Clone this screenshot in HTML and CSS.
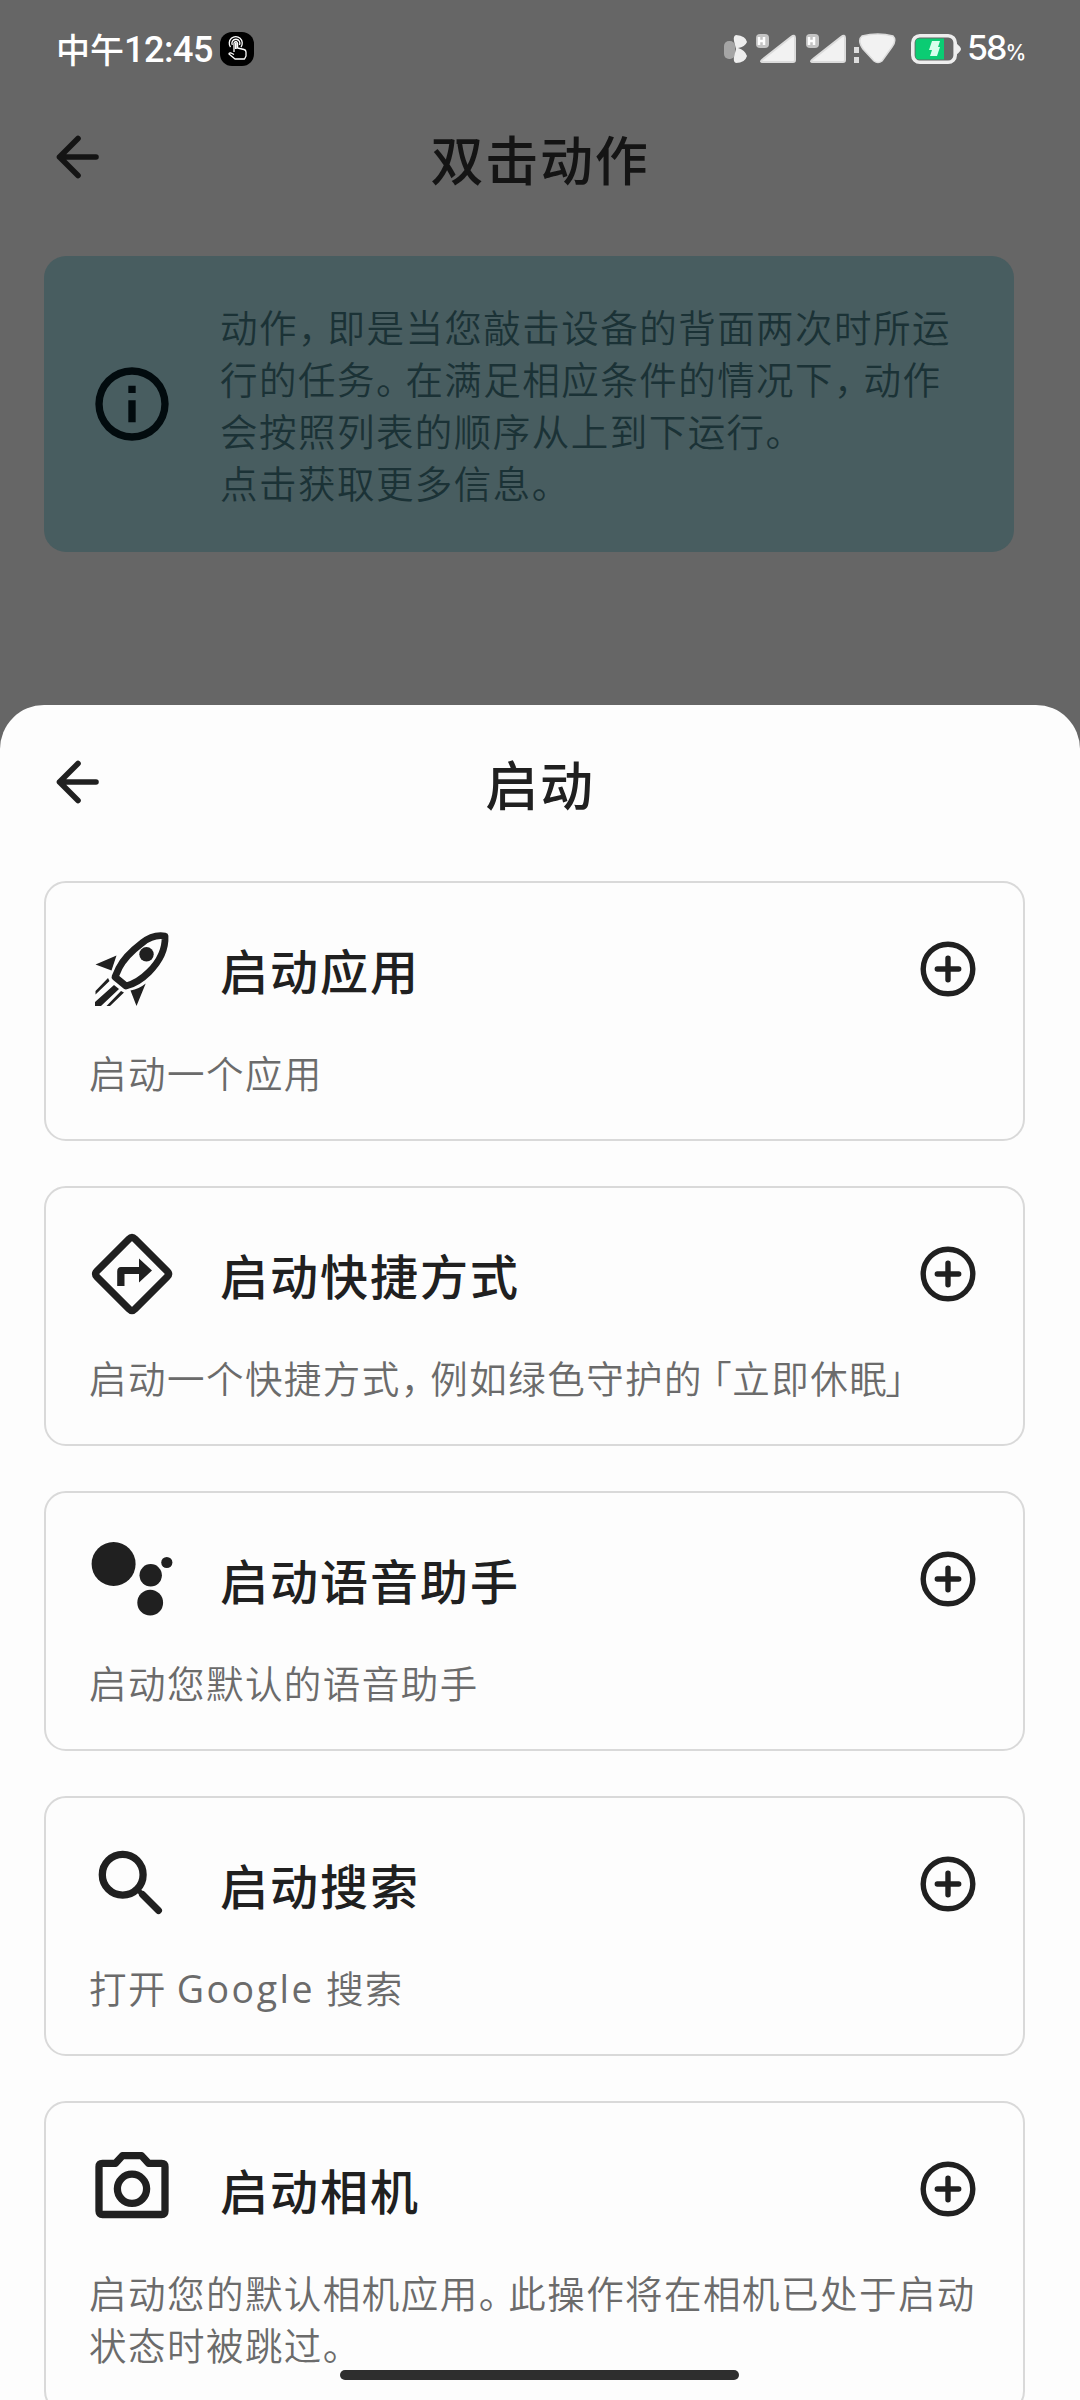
FILE: index.html
```html
<!DOCTYPE html>
<html lang="zh-CN">
<head>
<meta charset="utf-8">
<title>启动</title>
<link rel="stylesheet" href="styles.css">
</head>
<body>
<svg class="defs" width="0" height="0">
  <symbol id="back" viewBox="0 0 44 44"><path d="M3.500 22H40M22 3.500L3.500 22L22 40.500" fill="none" stroke="currentColor" stroke-width="5.600" stroke-linecap="round" stroke-linejoin="round"/></symbol>
  <symbol id="add" viewBox="0 0 56 56"><g fill="none" stroke="currentColor" stroke-width="5.400" stroke-linecap="round"><circle cx="28" cy="28" r="24.800"/><path d="M28 17.300V38.700M17.300 28H38.700"/></g></symbol>
  <symbol id="signal" viewBox="0 0 42 32"><rect x="0" y="1" width="13" height="14" rx="4" fill="#c4c4c4"/><path d="M3 4V12M3 8H8M8 4V12" stroke="#fff" stroke-width="2.500"/><path d="M7 26L35 4Q39 1 39 5V27Q39 29 37 29H7Q3 29 7 26Z" fill="#f2f2f2" stroke="#dcdcdc" stroke-width="2" stroke-linejoin="round"/></symbol>
</svg>
<div class="screen">
  <div class="status">
    <div class="clock"><span class="noon">中午</span><span class="digits">12:45</span></div>
    <svg class="touch" viewBox="0 0 34 34"><rect width="34" height="34" rx="12" fill="#000"/><g fill="none" stroke="#fff" stroke-width="1.300" stroke-linejoin="round"><path d="M10.500 15A6.500 6.500 0 1 1 21 15"/><path d="M12.300 13A4 4 0 1 1 19.500 13"/><path d="M14 20V11Q15.800 8 17.600 11V16L24 17.500Q26 18 26 20V24L24.500 27H15L9 22Q9 20.500 11 21L14 22.500"/></g><path d="M15 10.500H16.800V17H15Z" fill="#fff"/></svg>
    <div class="indicators">
      <svg class="bt" viewBox="0 0 26 34"><rect x="1" y="9" width="11" height="18" rx="5" fill="#a5a5a5"/><path d="M13 3Q23 4 24 10Q22 15 15 16Q22 18 24 24Q22 31 13 31Q10 30 11 25L13 17L11 9Q10 4 13 3Z" fill="#eee"/></svg>
      <svg class="sig"><use href="#signal"/></svg>
      <svg class="sig sig2"><use href="#signal"/></svg>
      <svg class="wifi" viewBox="0 0 42 32"><rect x="0" y="14" width="5" height="6" fill="#ddd"/><rect x="0" y="24" width="5" height="6" fill="#ddd"/><path d="M8 3Q24-1 39 3Q43 7 38 14L28 28Q24 31 20 28L9 16Q3 7 8 3Z" fill="#f2f2f2" stroke="#dcdcdc" stroke-width="1.500"/></svg>
      <svg class="battery" viewBox="0 0 50 30"><path d="M45 9Q50 13 50 15Q50 17 45 21Z" fill="#eee"/><rect x="1.800" y="1.800" width="42.400" height="26.400" rx="7" fill="#666" stroke="#eee" stroke-width="3.600"/><path d="M8 4.500H33V25.500H8Q4.500 25.500 4.500 22V8Q4.500 4.500 8 4.500Z" fill="#0bcc73"/><path d="M21 7H29L27 13H29L26 22H19L21 16H18Z" fill="#d8ffec"/></svg>
      <div class="percent">58<small>%</small></div>
    </div>
  </div>
  <header class="bar"><svg class="back"><use href="#back"/></svg><h1>双击动作</h1></header>
  <section class="info">
    <svg class="info-icon" viewBox="0 0 24 24"><path fill="currentColor" d="M11 7h2v2h-2zM11 11h2v6h-2zM12 2a10 10 0 1 0 0 20 10 10 0 0 0 0-20zm0 18a8 8 0 1 1 0-16 8 8 0 0 1 0 16z"/></svg>
    <p>动作<i>，</i>即是当您敲击设备的背面两次时所运<br>行的任务<i>。</i>在满足相应条件的情况下<i>，</i>动作<br>会按照列表的顺序从上到下运行<i>。</i><br>点击获取更多信息<i>。</i></p>
  </section>
</div>
<main class="sheet">
  <header class="bar"><svg class="back"><use href="#back"/></svg><h1>启动</h1></header>
  <div class="list">
    <article class="card">
      <div class="row">
        <svg class="icon" viewBox="0 0 88 88"><path d="M77 11Q65 9 54 18Q37 31 31 43L27 52L38 61Q50 58 61 47Q78 30 77 11Z" fill="none" stroke="currentColor" stroke-width="6.800" stroke-linejoin="round"/><circle cx="58.500" cy="29.300" r="7.200" fill="currentColor"/><path d="M28.500 30.500L7.500 39.500L23.500 45.500Z M57.700 58.500Q51 64 42.500 65.500L48.500 81Z M20 53L7.500 66V69.500L21.500 56Z M26 60L31 64L13 81H7V77Z M33 66L36 67.500L22 81H18.500Z" fill="currentColor"/></svg>
        <h2>启动应用</h2><svg class="add"><use href="#add"/></svg>
      </div>
      <p>启动一个应用</p>
    </article>
    <article class="card">
      <div class="row">
        <svg class="icon" viewBox="0 0 88 88"><path d="M41 9Q44 6 47 9L79 41Q82 44 79 47L47 79Q44 82 41 79L9 47Q6 44 9 41Z" fill="none" stroke="currentColor" stroke-width="7.300"/><path d="M29.200 56V41.500Q29.200 37 33 37H51V28.500L64 40.500L51 52.500V44H36.500V56Z" fill="currentColor"/></svg>
        <h2>启动快捷方式</h2><svg class="add"><use href="#add"/></svg>
      </div>
      <p>启动一个快捷方式<i>，</i>例如绿色守护的<span class="quote open">「</span>立即休眠<span class="quote close">」</span></p>
    </article>
    <article class="card">
      <div class="row">
        <svg class="icon" viewBox="0 0 88 88" fill="currentColor"><circle cx="25.600" cy="29" r="22"/><circle cx="62.700" cy="40.300" r="11.200"/><circle cx="62.200" cy="67.700" r="12.900"/><circle cx="78.800" cy="27.500" r="5.600"/></svg>
        <h2>启动语音助手</h2><svg class="add"><use href="#add"/></svg>
      </div>
      <p>启动您默认的语音助手</p>
    </article>
    <article class="card">
      <div class="row">
        <svg class="icon" viewBox="0 0 88 88" fill="none" stroke="currentColor"><circle cx="34.700" cy="34.700" r="20.400" stroke-width="7.300"/><path d="M50 50L54 54" stroke-width="5"/><path d="M54.500 54.500L70.500 70.500" stroke-width="7" stroke-linecap="round"/></svg>
        <h2>启动搜索</h2><svg class="add"><use href="#add"/></svg>
      </div>
      <p>打开 <span class="latin">Google</span> 搜索</p>
    </article>
    <article class="card">
      <div class="row">
        <svg class="icon" viewBox="0 0 88 88" fill="none" stroke="currentColor" stroke-width="7.300"><path d="M14.500 18.300H27.500L34.500 10.600H53.500L60.500 18.300H73.500Q77 18.300 77 21.800V66Q77 69.500 73.500 69.500H14.500Q11 69.500 11 66V21.800Q11 18.300 14.500 18.300Z" stroke-linejoin="round"/><circle cx="44" cy="43.800" r="14.600"/></svg>
        <h2>启动相机</h2><svg class="add"><use href="#add"/></svg>
      </div>
      <p>启动您的默认相机应用<i>。</i>此操作将在相机已处于启动<br>状态时被跳过<i>。</i></p>
    </article>
  </div>
</main>
<div class="home"></div>
</body>
</html>
```

FILE: styles.css
```css
* { box-sizing: border-box; }
body {
  margin: 0;
  width: 1080px;
  height: 2400px;
  overflow: hidden;
  display: flex;
  flex-direction: column;
  position: relative;
  background: #666;
  color: #202020;
  font-family: "Noto Sans CJK SC", sans-serif;
}
.defs { position: absolute; }
svg { display: block; flex: none; }
h1, h2, p { margin: 0; white-space: nowrap; }

.screen { height: 705px; flex: none; }
.status { height: 98px; padding: 0 54px 0 56px; display: flex; align-items: center; color: #fff; }
.clock { width: 164px; display: flex; align-items: center; font-weight: 500; line-height: 40px; white-space: nowrap; }
.noon { font-size: 34px; }
.digits { font-family: Roboto, sans-serif; font-size: 36px; letter-spacing: -0.500px; margin-top: 2px; }
.touch { width: 34px; height: 34px; }
.indicators { margin-left: auto; display: flex; align-items: center; }
.bt { width: 26px; height: 34px; margin-right: 7px; }
.sig { width: 42px; height: 32px; margin-right: 8px; }
.sig2 { margin-right: 6px; }
.wifi { width: 42px; height: 32px; margin-right: 15px; }
.battery { width: 50px; height: 30px; margin-right: 6px; }
.percent { width: 59px; font: 500 34px/40px Inter, sans-serif; letter-spacing: -2px; white-space: nowrap; padding-top: 2px; }
.percent small { font-size: 21px; letter-spacing: 0; }

.bar { display: grid; grid-template-columns: 44px 1fr 44px; align-items: center; padding: 0 56px; height: 118px; }
.bar h1 { text-align: center; font-size: 53px; font-weight: 500; line-height: 76px; letter-spacing: 1.700px; padding-top: 2px; }
.back { width: 44px; height: 44px; }
.screen .bar { color: #141414; }

.info { margin: 40px 66px 0 44px; height: 296px; padding: 0 0 0 44px; border-radius: 22px; background: #485d60; color: #1b3236; display: flex; align-items: center; gap: 44px; }
.info-icon { width: 88px; height: 88px; color: #020b0e; }
.info p { margin-top: -1px; }
.info p, .card p { font-size: 37.500px; line-height: 52px; letter-spacing: 1.470px; font-weight: 350; }
.info i, .card i { font-style: normal; letter-spacing: -8px; }
.quote { font-feature-settings: "halt"; }
.open { margin: 0 -1px 0 10px; }
.close { margin-left: -3px; }

.sheet { flex: 1; min-height: 0; overflow: hidden; background: #fdfdfd; border-radius: 44px 44px 0 0; }
.sheet .bar { height: 154px; }
.list { margin-top: 22px; padding: 0 55px 0 44px; display: flex; flex-direction: column; gap: 45px; }
.card { min-height: 260px; border: 2px solid #d9d9d9; border-radius: 22px; padding: 42px 0 41px 43px; }
.row { display: flex; align-items: center; height: 88px; padding-right: 47px; }
.icon { width: 88px; height: 88px; margin-right: 44px; margin-left: -1px; }
.row h2 { flex: 1; font-size: 48px; font-weight: 500; line-height: 70px; letter-spacing: 2px; padding-top: 0; }
.add { width: 56px; height: 56px; }
.card p { color: #6b6b6b; height: auto; margin-top: 33px; }
.latin { font-family: "Open Sans", sans-serif; font-weight: 400; line-height: 1; letter-spacing: 2.500px; margin-right: 1px; }
.home { position: absolute; left: 340px; top: 2370px; width: 399px; height: 10px; border-radius: 5px; background: #2e2e2e; }
```
